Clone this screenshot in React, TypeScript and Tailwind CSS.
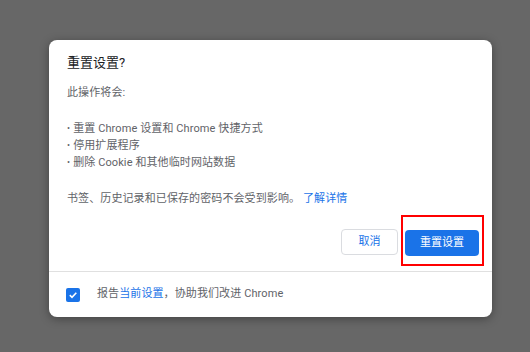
import React from "react";

const font = { fontFamily: "Roboto, 'Noto Sans CJK SC', 'Noto Sans', sans-serif" };

function Bullet({ children }: { children: React.ReactNode }) {
  return (
    <div className="flex items-center h-[17px]">
      <span className="mr-[3px] text-[9px]">•</span>
      <span>{children}</span>
    </div>
  );
}

export default function App() {
  return (
    <div
      className="w-[530px] h-[352px] bg-[#676767] pl-[49px] pt-[40px] overflow-hidden"
      style={font}
    >
      <div className="w-[443px] h-[277px] bg-white rounded-[8px] shadow-[0_2px_10px_rgba(0,0,0,0.35)] flex flex-col">
        <div className="px-[18px] pt-[13px]">
          <div className="text-[13px] leading-[20px] text-[#202124]">重置设置?</div>
          <div className="mt-[11px] text-[11px] leading-[17px] text-[#5f6368] tracking-[0.1px]">
            <div>此操作将会:</div>
            <div className="mt-[19px]">
              <Bullet>重置 Chrome 设置和 Chrome 快捷方式</Bullet>
              <Bullet>停用扩展程序</Bullet>
              <Bullet>删除 Cookie 和其他临时网站数据</Bullet>
            </div>
            <div className="mt-[19px]">
              书签、历史记录和已保存的密码不会受到影响。{" "}
              <span className="text-[#1a73e8]">了解详情</span>
            </div>
          </div>
        </div>
        <div className="flex justify-end gap-[7px] pr-[13px] mt-auto mb-[15px]">
          <button className="w-[57px] h-[26px] rounded-[4px] border border-[#dadce0] text-[11px] text-[#1a73e8] bg-white">
            取消
          </button>
          <div className="relative">
            <button className="w-[74px] h-[26px] rounded-[4px] bg-[#1a73e8] text-[11px] text-white">
              重置设置
            </button>
            <div className="absolute left-[-4px] right-[-5px] top-[-14px] bottom-[-10px] border-2 border-[#ff0000]" />
          </div>
        </div>
        <div className="h-px bg-[#e0e0e0]" />
        <div className="h-[45px] flex items-center pl-[17px]">
          <div className="w-[14px] h-[14px] rounded-[2px] bg-[#1a73e8] flex items-center justify-center">
            <svg width="10" height="10" viewBox="0 0 10 10">
              <path d="M1.8 5.2 L4 7.3 L8.3 2.8" fill="none" stroke="white" strokeWidth="1.6" />
            </svg>
          </div>
          <div className="ml-[17px] text-[11px] text-[#5f6368] tracking-[0.1px]">
            报告<span className="text-[#1a73e8]">当前设置</span>，协助我们改进 Chrome
          </div>
        </div>
      </div>
    </div>
  );
}
